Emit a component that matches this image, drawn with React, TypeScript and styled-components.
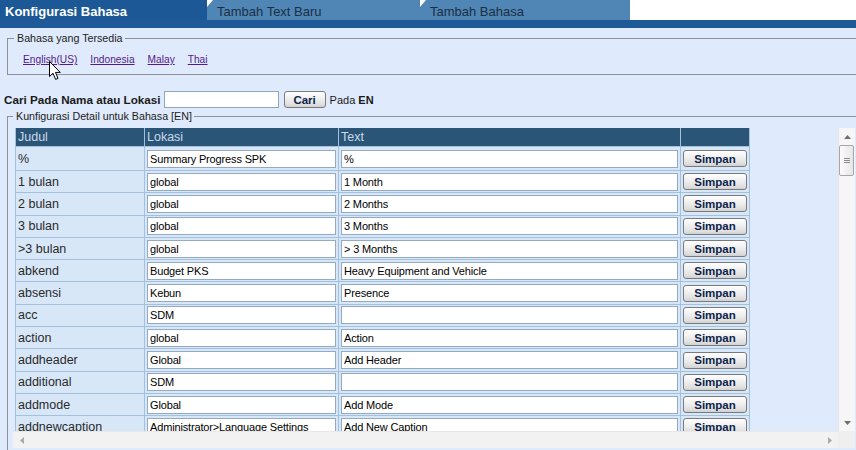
import React from 'react';
import { styled, createGlobalStyle } from 'styled-components';

const GlobalStyle = createGlobalStyle`
    html, body {
        margin: 0;
        padding: 0;
        overflow: hidden;
        background: #dfeafc;
        font-family: "Liberation Sans", Arial, sans-serif;
    }
`;

interface Entry {
    judul: string;
    lokasi: string;
    text: string;
}

const entries: Entry[] = [
    { judul: '%', lokasi: 'Summary Progress SPK', text: '%' },
    { judul: '1 bulan', lokasi: 'global', text: '1 Month' },
    { judul: '2 bulan', lokasi: 'global', text: '2 Months' },
    { judul: '3 bulan', lokasi: 'global', text: '3 Months' },
    { judul: '>3 bulan', lokasi: 'global', text: '> 3 Months' },
    { judul: 'abkend', lokasi: 'Budget PKS', text: 'Heavy Equipment and Vehicle' },
    { judul: 'absensi', lokasi: 'Kebun', text: 'Presence' },
    { judul: 'acc', lokasi: 'SDM', text: '' },
    { judul: 'action', lokasi: 'global', text: 'Action' },
    { judul: 'addheader', lokasi: 'Global', text: 'Add Header' },
    { judul: 'additional', lokasi: 'SDM', text: '' },
    { judul: 'addmode', lokasi: 'Global', text: 'Add Mode' },
    { judul: 'addnewcaption', lokasi: 'Administrator>Language Settings', text: 'Add New Caption' },
];

const tabs = [
    { label: 'Konfigurasi Bahasa', width: 207 },
    { label: 'Tambah Text Baru', width: 213 },
    { label: 'Tambah Bahasa', width: 210 },
];
const languages = ['English(US)', 'Indonesia', 'Malay', 'Thai'];

const Cursor = () => (
    <CursorWrap width="13" height="20" viewBox="0 0 13 20">
        <path d="M0.5 0.5 L0.5 15.5 L4 12.2 L6.6 18.4 L9 17.4 L6.5 11.4 L11.3 11.4 Z" fill="#ffffff" stroke="#000000" strokeWidth="1" />
    </CursorWrap>
);

type Dir = 'up' | 'down' | 'left' | 'right';

const arrowPoints: Record<Dir, string> = {
    up: '0,4 3.5,0 7,4',
    down: '0,0 7,0 3.5,4',
    left: '4,0 4,7 0,3.5',
    right: '0,0 4,3.5 0,7',
};

const Arrow = ({ dir, color }: { dir: Dir; color: string }) => {
    const vertical = dir === 'up' || dir === 'down';
    return (
        <svg width={vertical ? 7 : 4} height={vertical ? 4 : 7} viewBox={vertical ? '0 0 7 4' : '0 0 4 7'}>
            <polygon points={arrowPoints[dir]} fill={color} />
        </svg>
    );
};

const App: React.FC = () => {
    return (
        <>
            <GlobalStyle />
            <TabBar>
                {tabs.map((t, i) => (
                    <Tab key={t.label} $active={i === 0} $w={t.width}>
                        {t.label}
                    </Tab>
                ))}
            </TabBar>
            <TabBand />
            <Page>
                <FieldSet>
                    <Legend>Bahasa yang Tersedia</Legend>
                    <LinkRow>
                        {languages.map(l => (
                            <LangLink key={l} href="#">{l}</LangLink>
                        ))}
                        <Cursor />
                    </LinkRow>
                </FieldSet>

                <SearchRow>
                    <SearchLabel>Cari Pada Nama atau Lokasi</SearchLabel>
                    <SearchInput type="text" />
                    <Button $w={42}>Cari</Button>
                    <SearchHint>Pada <b>EN</b></SearchHint>
                </SearchRow>

                <FieldSet $tight>
                    <Legend>Kunfigurasi Detail untuk Bahasa [EN]</Legend>
                    <ScrollFrame>
                        <Viewport>
                            <Table>
                                <colgroup>
                                    <col style={{ width: 129 }} />
                                    <col style={{ width: 194 }} />
                                    <col style={{ width: 342 }} />
                                    <col style={{ width: 69 }} />
                                </colgroup>
                                <thead>
                                    <tr>
                                        <Th>Judul</Th>
                                        <Th>Lokasi</Th>
                                        <Th>Text</Th>
                                        <Th />
                                    </tr>
                                </thead>
                                <tbody>
                                    {entries.map(e => (
                                        <Row key={e.judul}>
                                            <KeyCell>{e.judul}</KeyCell>
                                            <Cell><CellInput type="text" defaultValue={e.lokasi} /></Cell>
                                            <Cell><CellInput type="text" defaultValue={e.text} /></Cell>
                                            <Cell $center><Button $w={64}>Simpan</Button></Cell>
                                        </Row>
                                    ))}
                                </tbody>
                            </Table>
                        </Viewport>
                        <VBar>
                            <ScrollBtn><Arrow dir="up" color="#6e6e6e" /></ScrollBtn>
                            <VTrack>
                                <Thumb><Grip /></Thumb>
                            </VTrack>
                            <ScrollBtn><Arrow dir="down" color="#6e6e6e" /></ScrollBtn>
                        </VBar>
                        <HBar>
                            <ScrollBtn><Arrow dir="left" color="#a9a9a9" /></ScrollBtn>
                            <HTrack />
                            <ScrollBtn><Arrow dir="right" color="#a9a9a9" /></ScrollBtn>
                        </HBar>
                        <Corner />
                    </ScrollFrame>
                </FieldSet>
            </Page>
        </>
    );
};

const TabBar = styled.div`
    display: flex;
    height: 20px;
    background: #ffffff;
`;

const Tab = styled.div<{ $active: boolean; $w: number }>`
    flex: 0 0 ${({ $w }) => $w}px;
    box-sizing: border-box;
    height: 20px;
    line-height: 23px;
    padding-left: ${({ $active }) => ($active ? 5 : 10)}px;
    font-size: 13px;
    font-weight: ${({ $active }) => ($active ? 700 : 400)};
    color: ${({ $active }) => ($active ? '#ffffff' : '#1c2e44')};
    background: ${({ $active }) => ($active ? '#1c5895' : '#4f86b5')};
    clip-path: ${({ $active }) =>
        $active ? 'none' : 'polygon(6px 0, 100% 0, 100% 100%, 0 100%, 0 7px)'};
    white-space: nowrap;
`;

const TabBand = styled.div`
    height: 8px;
    background: #1f5a98;
`;

const Page = styled.div`
    padding-left: 4px;
`;

const FieldSet = styled.fieldset<{ $tight?: boolean }>`
    margin: ${({ $tight }) => ($tight ? '2px -60px 0 3px' : '4px -60px 0 3px')};
    padding: ${({ $tight }) => ($tight ? '5px 0 4px 5px' : '0 0 0 6px')};
    border: 1px solid #8e9094;
    min-inline-size: 0;
`;

const Legend = styled.legend`
    padding: 0 2px 0 3px;
    font-size: 10.7px;
    line-height: 13px;
    color: #222222;
`;

const LinkRow = styled.div`
    position: relative;
    display: flex;
    gap: 13px;
    padding: 8px 0 7px 9px;
    line-height: 14px;
`;

const LangLink = styled.a`
    font-size: 10.2px;
    color: #551a8b;
    text-decoration: underline;
`;

const CursorWrap = styled.svg`
    position: absolute;
    left: 35px;
    top: 16px;
`;

const SearchRow = styled.div`
    display: flex;
    align-items: center;
    height: 17px;
    margin-top: 16px;
`;

const SearchLabel = styled.span`
    font-size: 11.7px;
    font-weight: 700;
    color: #1a1a1a;
    margin-right: 3px;
`;

const SearchInput = styled.input`
    box-sizing: border-box;
    width: 115px;
    height: 17px;
    margin: 0 5px 0 0;
    border: 1px solid #8fa6bd;
    background: #ffffff;
    padding: 0 2px;
`;

const Button = styled.button<{ $w: number }>`
    box-sizing: border-box;
    width: ${({ $w }) => $w}px;
    height: 17px;
    margin: 0;
    padding: 1px 0 0;
    border: 1px solid #7a7a7a;
    border-radius: 3px;
    background: linear-gradient(#fefefe, #efefef 45%, #dedede 85%, #cfcfcf);
    font-family: "Liberation Sans", Arial, sans-serif;
    font-size: 11.5px;
    font-weight: 700;
    line-height: 13px;
    color: #0d1f4c;
`;

const SearchHint = styled.span`
    margin-left: 4px;
    font-size: 11px;
    color: #1a1a1a;
`;

const ScrollFrame = styled.div`
    display: grid;
    grid-template-columns: 825px 17px;
    grid-template-rows: 303px 17px;
    width: 842px;
`;

const Viewport = styled.div`
    overflow: hidden;
`;

const VBar = styled.div`
    display: flex;
    flex-direction: column;
    background: #f6f6f6;
    border-left: 1px solid #e6e6e6;
`;

const HBar = styled.div`
    display: flex;
    background: #f2f2f2;
    border-top: 1px solid #e8e8e8;
`;

const ScrollBtn = styled.div`
    flex: 0 0 17px;
    height: 17px;
    display: flex;
    align-items: center;
    justify-content: center;
`;

const VTrack = styled.div`
    flex: 1;
    display: flex;
    flex-direction: column;
`;

const HTrack = styled.div`
    flex: 1;
`;

const Thumb = styled.div`
    box-sizing: border-box;
    height: 31px;
    margin: 0 1px 0 0;
    border: 1px solid #a6a6a6;
    border-radius: 2px;
    background: linear-gradient(to right, #fcfcfc, #e6e6e6);
    display: flex;
    align-items: center;
    justify-content: center;
`;

const Grip = styled.div`
    width: 6px;
    height: 5px;
    background: repeating-linear-gradient(to bottom, #8c8c8c 0 1px, transparent 1px 2px);
`;

const Corner = styled.div`
    background: #efefef;
`;

const Table = styled.table`
    border-collapse: collapse;
    table-layout: fixed;
    width: 734px;
    margin-left: 2px;
    font-size: 12.5px;
`;

const Th = styled.th`
    height: 18px;
    padding: 0 0 0 2px;
    background: #2b5576;
    border: 1px solid #a3c0dd;
    border-top: none;
    color: #c8dbed;
    font-weight: 400;
    text-align: left;
`;

const Row = styled.tr`
    height: 22.3px;
    &:first-child {
        height: 24px;
    }
`;

const Cell = styled.td<{ $center?: boolean }>`
    padding: 0 2px;
    background: #d8e7f8;
    border: 1px solid #a3c0dd;
    text-align: ${({ $center }) => ($center ? 'center' : 'left')};
`;

const KeyCell = styled(Cell)`
    padding-left: 2px;
    color: #2a2a2a;
    white-space: nowrap;
    overflow: hidden;
`;

const CellInput = styled.input`
    display: block;
    box-sizing: border-box;
    width: 100%;
    height: 18px;
    margin: 0;
    padding: 0 2px;
    border: 1px solid #93aac2;
    background: #ffffff;
    font-family: "Liberation Sans", Arial, sans-serif;
    font-size: 11px;
    letter-spacing: -0.15px;
    color: #000000;
`;

export default App;
